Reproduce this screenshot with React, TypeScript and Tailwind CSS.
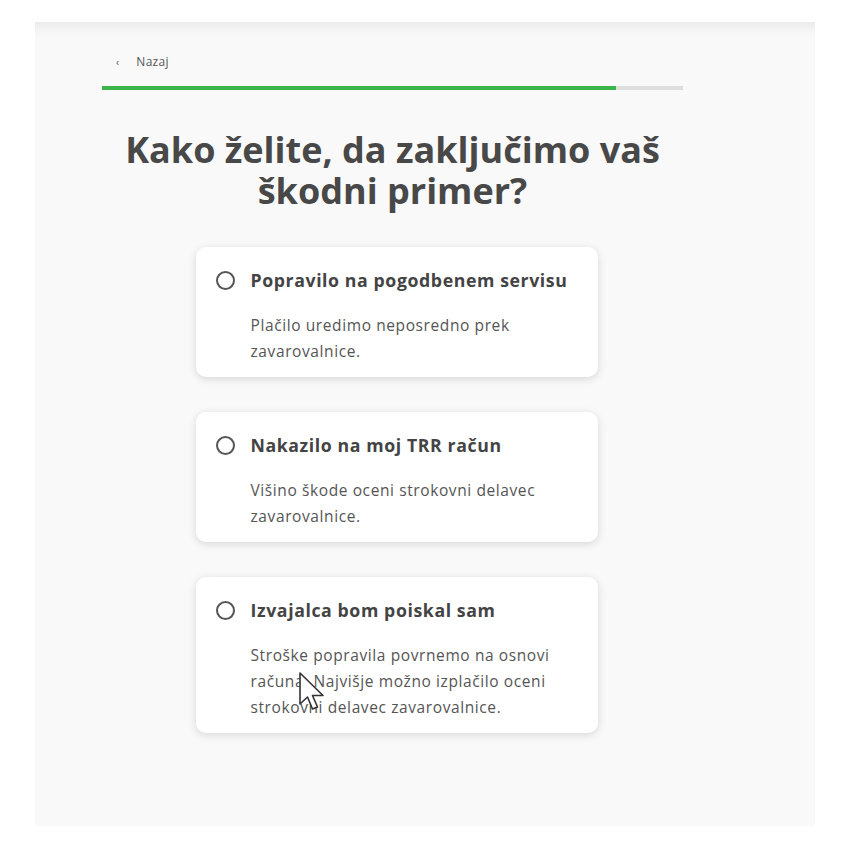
const options = [
  {
    title: "Popravilo na pogodbenem servisu",
    text: "Plačilo uredimo neposredno prek zavarovalnice.",
  },
  {
    title: "Nakazilo na moj TRR račun",
    text: "Višino škode oceni strokovni delavec zavarovalnice.",
  },
  {
    title: "Izvajalca bom poiskal sam",
    text: "Stroške popravila povrnemo na osnovi računa. Najvišje možno izplačilo oceni strokovni delavec zavarovalnice.",
  },
];

function Cursor() {
  return (
    <svg
      className="absolute left-[102px] top-[94px]"
      width="30"
      height="42"
      viewBox="0 0 30 42"
    >
      <path
        d="M2 2 L2 33 L9.5 26 L14.5 38 L19.5 36 L14.5 24.5 L25 24.5 Z"
        fill="white"
        stroke="#333"
        strokeWidth="1.6"
        strokeLinejoin="round"
      />
    </svg>
  );
}

export default function App() {
  return (
    <div className="min-h-[850px] bg-white pt-[22px] pl-[35px] font-['Open_Sans',sans-serif]">
      <div className="w-[780px] h-[804px] bg-[#f9f9f9] shadow-[inset_0_14px_14px_-10px_rgba(0,0,0,0.08)]">
        <div className="w-[581px] ml-[67px] pt-[32px]">
          {/* back link */}
          <div className="flex items-center gap-[17px] pl-[14px] text-[12px] tracking-[0.3px] text-[#555] h-[16px]">
            <span className="text-[10px] leading-none">‹</span>
            <span>Nazaj</span>
          </div>
          {/* progress */}
          <div className="mt-[16px] h-[4px] bg-[#dedede]">
            <div className="h-full w-[514px] bg-[#39b54a]" />
          </div>

          <h1 className="mt-[39px] flex flex-col items-center text-[36px] leading-[41px] font-bold text-[#484848]">
            <span>Kako želite, da zaključimo vaš</span>
            <span>škodni primer?</span>
          </h1>

          <div className="mt-[36px] flex flex-col items-center gap-[35px] pl-[8px]">
            {options.map((o, i) => (
              <div
                key={i}
                className="relative w-[402px] bg-white rounded-[10px] shadow-[0_2px_8px_rgba(0,0,0,0.14)] pl-[20px] pr-[20px] pt-[21px] pb-[13px]"
              >
                <div className="flex items-center gap-[16px]">
                  <span className="w-[19px] h-[19px] rounded-full border-2 border-[#555] shrink-0" />
                  <span className="text-[17.7px] tracking-[0.6px] font-bold text-[#444] leading-[24px]">
                    {o.title}
                  </span>
                </div>
                <p className="mt-[20px] pl-[35px] w-[355px] text-[15.5px] tracking-[0.6px] leading-[26px] text-[#555]">
                  {o.text}
                </p>
                {i === 2 && <Cursor />}
              </div>
            ))}
          </div>
        </div>
      </div>
    </div>
  );
}
